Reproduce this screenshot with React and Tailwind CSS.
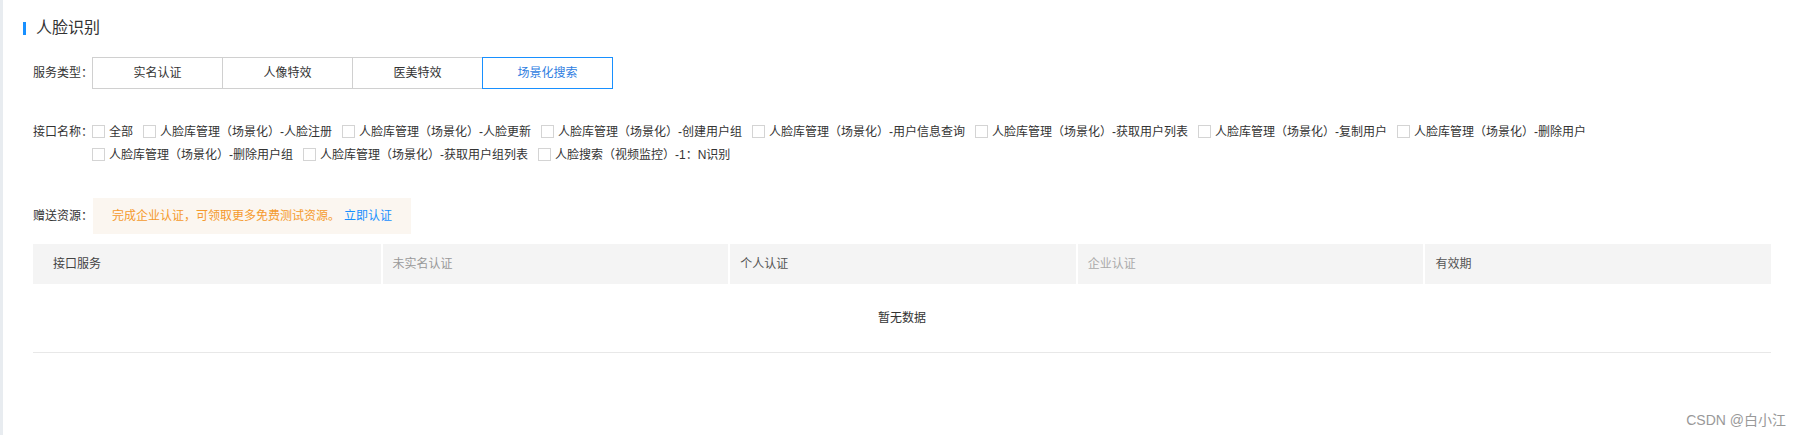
import React, { useState } from "react";

const serviceTypes = ["实名认证", "人像特效", "医美特效", "场景化搜索"];

const apis = [
  "全部",
  "人脸库管理（场景化）-人脸注册",
  "人脸库管理（场景化）-人脸更新",
  "人脸库管理（场景化）-创建用户组",
  "人脸库管理（场景化）-用户信息查询",
  "人脸库管理（场景化）-获取用户列表",
  "人脸库管理（场景化）-复制用户",
  "人脸库管理（场景化）-删除用户",
  "人脸库管理（场景化）-删除用户组",
  "人脸库管理（场景化）-获取用户组列表",
  "人脸搜索（视频监控）-1：N识别",
];

const columns = [
  { title: "接口服务", cls: "pl-[20px] text-[#444]" },
  { title: "未实名认证", cls: "pl-[10px] text-[#999]" },
  { title: "个人认证", cls: "pl-[10px] text-[#555]" },
  { title: "企业认证", cls: "pl-[10px] text-[#aaa]" },
  { title: "有效期", cls: "pl-[10px] text-[#555]" },
];

export default function App() {
  const [active, setActive] = useState(3);
  const [checked, setChecked] = useState([]);

  const toggle = (i) =>
    setChecked((c) => (c.includes(i) ? c.filter((x) => x !== i) : [...c, i]));

  return (
    <div
      className="relative flex min-h-[435px] w-full bg-white text-[12px] text-[#333]"
      style={{ fontFamily: '"Liberation Sans", "Noto Sans CJK SC", sans-serif' }}
    >
      <div className="w-[3px] shrink-0 bg-[#e8ecf0]" />
      <div className="flex-1 px-[20px] pt-[18px]">
        {/* title */}
        <div className="flex h-[20px] items-center">
          <span className="h-[13px] w-[3px] bg-[#1890ff]" />
          <span className="ml-[10px] text-[16px] text-[#333]">人脸识别</span>
        </div>

        <div className="px-[10px]">
          {/* service type */}
          <div className="mt-[19px] flex items-center">
            <span className="w-[59px] shrink-0 whitespace-nowrap text-[#333]">服务类型：</span>
            <div className="flex">
              {serviceTypes.map((t, i) => (
                <button
                  key={t}
                  onClick={() => setActive(i)}
                  className={
                    "flex h-[32px] w-[131px] items-center justify-center border " +
                    (i > 0 ? "-ml-px " : "") +
                    (active === i
                      ? "relative z-10 border-[#1890ff] text-[#2f7de1]"
                      : "border-[#d0d0d0] text-[#333]")
                  }
                >
                  {t}
                </button>
              ))}
            </div>
          </div>

          {/* api names */}
          <div className="mt-[31px] flex items-start">
            <span className="flex h-[23px] w-[59px] shrink-0 items-center whitespace-nowrap text-[#333]">
              接口名称：
            </span>
            <div className="flex flex-1 flex-wrap">
              {apis.map((a, i) => (
                <label
                  key={a}
                  onClick={() => toggle(i)}
                  className="mr-[10px] flex h-[23px] cursor-pointer items-center whitespace-nowrap"
                >
                  <span
                    className={
                      "h-[13px] w-[13px] shrink-0 border " +
                      (checked.includes(i)
                        ? "border-[#1890ff] bg-[#1890ff]"
                        : "border-[#d4d4d4] bg-white")
                    }
                  />
                  <span className="ml-[4px] text-[#333]">{a}</span>
                </label>
              ))}
            </div>
          </div>

          {/* free resources */}
          <div className="mt-[32px] flex items-center">
            <span className="w-[60px] shrink-0 whitespace-nowrap text-[#333]">赠送资源：</span>
            <div className="flex h-[36px] items-center bg-[#fbf6f0] px-[19px]">
              <span className="text-[#f59a2d]">完成企业认证，可领取更多免费测试资源。</span>
              <a className="ml-[4px] cursor-pointer text-[#1890ff]">立即认证</a>
            </div>
          </div>

          {/* table */}
          <div className="mt-[10px]">
            <div className="grid h-[40px] grid-cols-5 bg-[#f4f4f4]">
              {columns.map((c, i) => (
                <div
                  key={c.title}
                  className={
                    "flex items-center " + c.cls + (i > 0 ? " border-l-2 border-white" : "")
                  }
                >
                  {c.title}
                </div>
              ))}
            </div>
            <div className="flex h-[69px] items-center justify-center border-b border-[#e8e8e8] text-[#333]">
              暂无数据
            </div>
          </div>
        </div>
      </div>

      <span className="absolute bottom-[5px] right-[15px] text-[14px] leading-[20px] text-[#999]">
        CSDN @白小江
      </span>
    </div>
  );
}
